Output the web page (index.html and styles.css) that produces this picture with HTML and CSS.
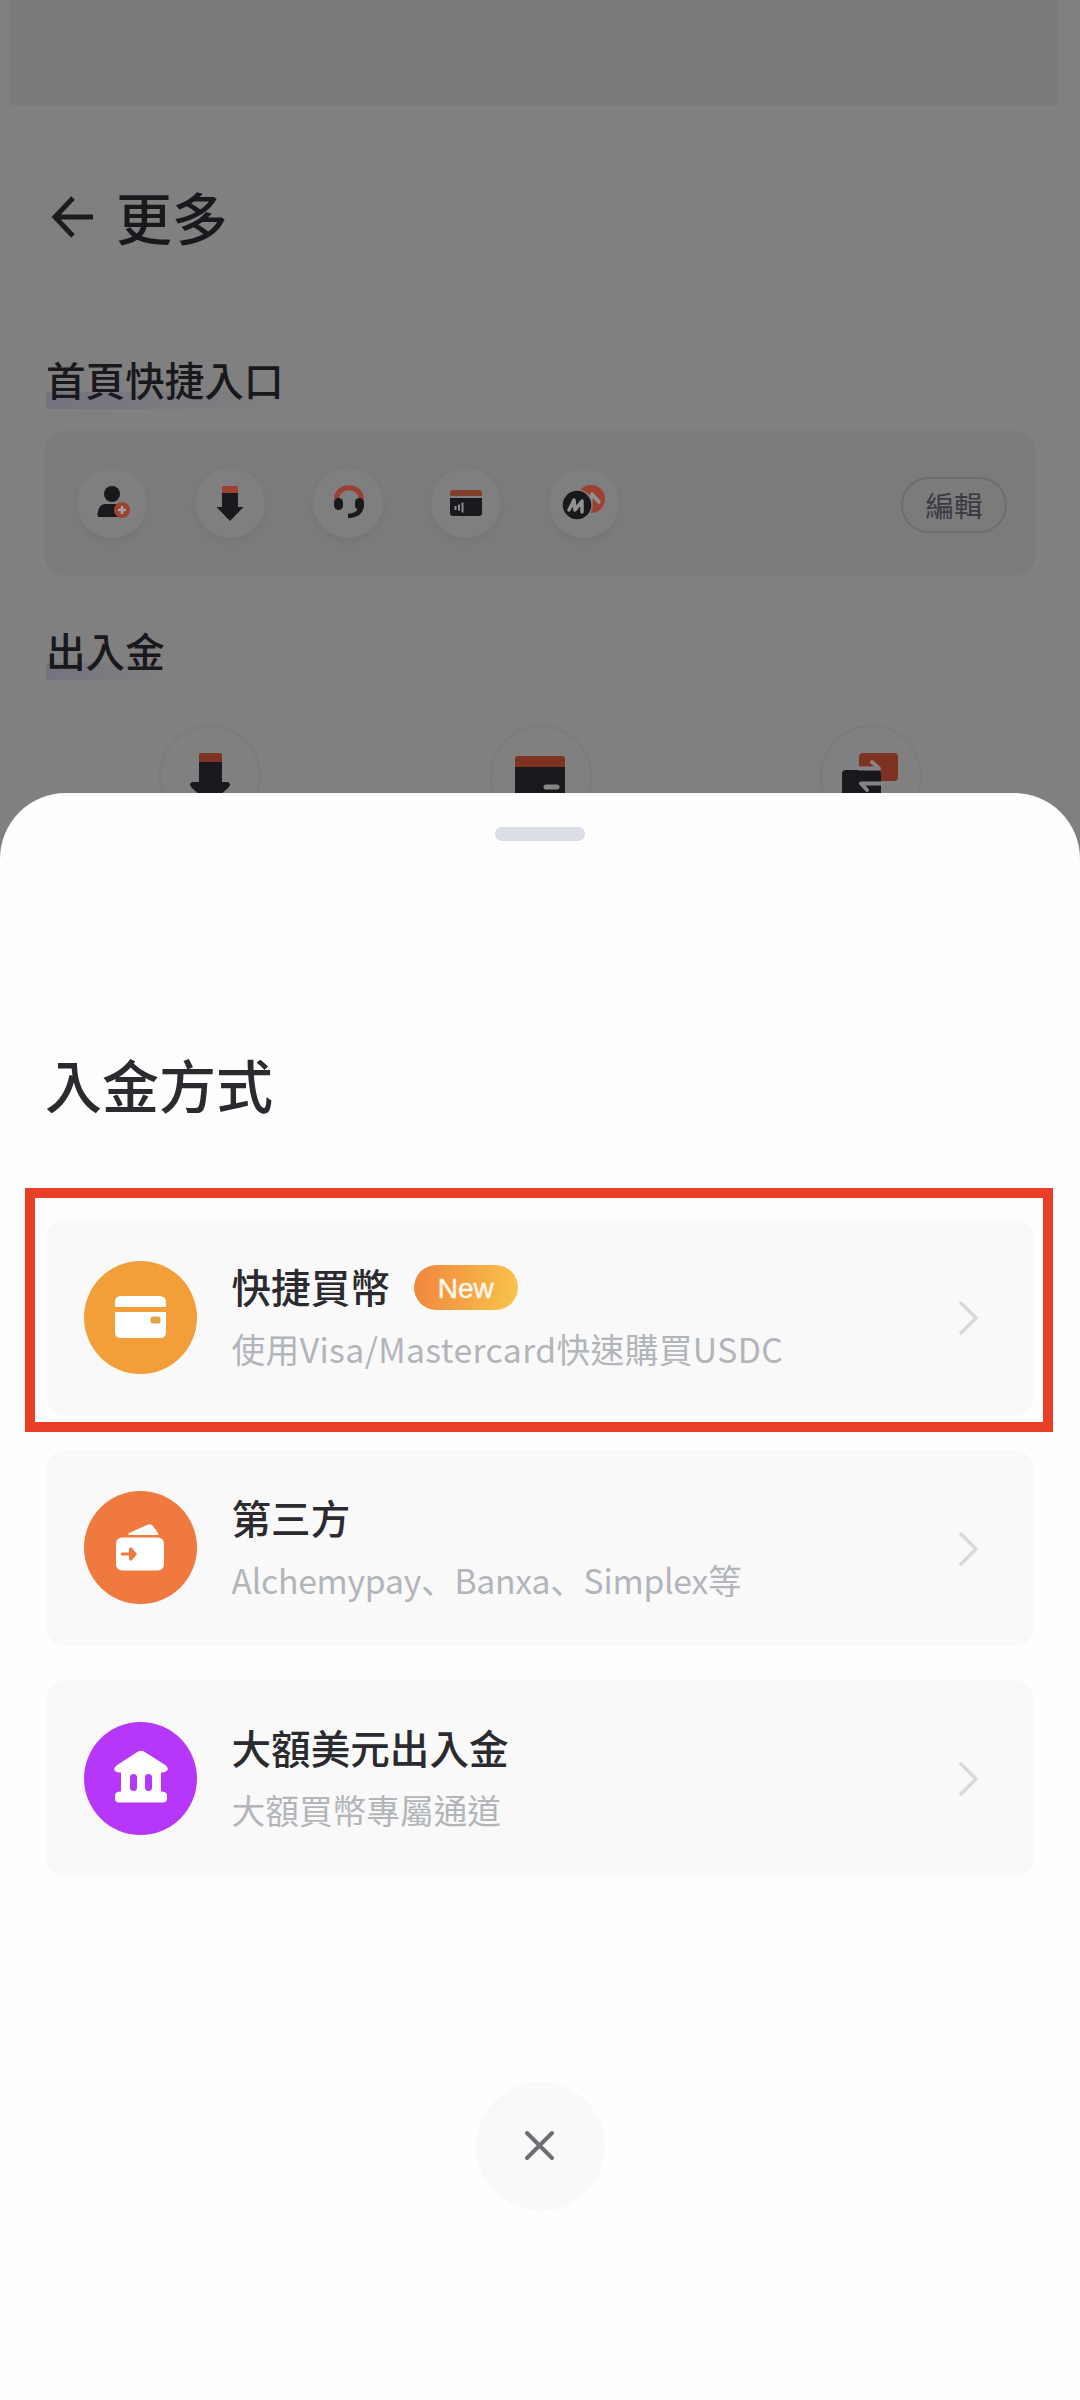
FILE: index.html
```html
<!DOCTYPE html>
<html lang="zh-Hant">
<head>
<meta charset="utf-8">
<title>更多</title>
<link rel="stylesheet" href="styles.css">
</head>
<body>
<div class="screen">
  <main class="page">
    <div class="status"></div>
    <header class="header">
      <svg class="back" width="44" height="44" viewBox="0 0 44 44"><path d="M42 22H5M22 3L4 22l18 19"/></svg>
      <h1>更多</h1>
    </header>
    <h2 class="section"><span>首頁快捷入口</span></h2>
    <section class="shortcuts">
      <div class="bubble"><svg width="36" height="36" viewBox="0 0 36 36"><circle class="ink" cx="18" cy="9" r="8"/><path class="ink" d="M11 19h17v13H6q-3 0-2.500-3.500Q5 19 11 19z"/><circle class="red" cx="28" cy="25" r="8"/><path class="plus" d="M28 21v8M24 25h8"/></svg></div>
      <div class="bubble"><svg width="36" height="36" viewBox="0 0 36 36"><path class="ink" d="M10 7h16v15h5.500L18 36 4.500 22H10z"/><path class="red" d="M10 2q0-1 1-1h14q1 0 1 1v6H10z"/></svg></div>
      <div class="bubble"><svg width="36" height="36" viewBox="0 0 36 36"><path class="band" d="M6.500 14C7 -1 31 -1 31.500 14"/><path class="mic" d="M31.500 19Q32 30 18 31"/><rect class="ink" x="4" y="13" width="9" height="12" rx="4.500"/><rect class="ink" x="25" y="13" width="9" height="12" rx="4.500"/></svg></div>
      <div class="bubble"><svg width="36" height="36" viewBox="0 0 36 36"><path class="rust" d="M2 11V8q0-3 3-3h26q3 0 3 3v3z"/><path class="ink" d="M2 13h32v15q0 3-3 3H5q-3 0-3-3z"/><path class="wave" d="M7.500 21v4M11 19.500v6M14.500 17.500v10"/></svg></div>
      <div class="bubble"><svg width="44" height="36" viewBox="0 0 44 36"><circle class="red" cx="29" cy="14" r="14"/><path class="letter" d="M28 19l2-10 7 8"/><circle class="coin" cx="15" cy="20" r="15"/><path class="letter" d="M7 25l5-10 1 10 7-9v11"/></svg></div>
      <button class="edit">編輯</button>
    </section>
    <h2 class="section funds"><span>出入金</span></h2>
    <section class="funds-row">
      <div class="ring"><svg width="56" height="56" viewBox="0 0 56 56"><path class="ink" d="M17 12h23v20h6q4 2 0 6L28 54 10 38q-4-4 0-6h7z"/><path class="brick" d="M17 12V5q0-2 2-2h19q2 0 2 2v7z"/></svg></div>
      <div class="ring"><svg width="56" height="56" viewBox="0 0 56 56"><path class="brick" d="M2 17V9q0-3 3-3h44q3 0 3 3v8z"/><path class="ink" d="M2 17h50v32H2z"/><path class="dash" d="M33 37h11"/></svg></div>
      <div class="ring"><svg width="60" height="56" viewBox="0 0 60 56"><rect class="brick" x="18" y="3" width="39" height="28" rx="4"/><path class="ink" d="M1 24q0-4 4-4h31q4 0 4 4v28H1z"/><path class="swap" d="M18 18.500h20L31 12"/><path class="swap" d="M41 33.500H20L26 40"/></svg></div>
    </section>
  </main>

  <aside class="sheet">
    <div class="handle"></div>
    <h2 class="sheet-title">入金方式</h2>
    <div class="methods">
      <div class="method picked">
        <div class="disc amber"><svg width="56" height="46" viewBox="0 0 56 46"><path d="M2 13V8q0-6 6-6h38q7 0 7 6v5zM2 18h51v20q0 6-6 6H8q-6 0-6-6z"/><rect class="cut-amber" x="37.500" y="22.500" width="10" height="7" rx="2.500"/></svg></div>
        <div class="label"><h3>快捷買幣 <em class="badge">New</em></h3><p class="cards">使用Visa/Mastercard快速購買USDC</p></div>
        <svg class="chevron" width="20" height="34" viewBox="0 0 20 34"><path d="M2 2l15 15L2 32"/></svg>
      </div>
      <div class="method">
        <div class="disc orange"><svg width="52" height="52" viewBox="0 0 52 52"><path d="M15 13L33 5q4-2 6 1l5 7q1 2-1 2H16q-3 0-1-2z"/><rect x="2" y="17.500" width="48" height="33" rx="6"/><path class="cut-orange" d="M8 32.500h7V29q1-3 3-1l5 6-5 6q-2 2-3-1v-3.500H8q-3-1.500 0-3z"/></svg></div>
        <div class="label"><h3>第三方</h3><p class="vendors">Alchemypay、Banxa、Simplex等</p></div>
        <svg class="chevron" width="20" height="34" viewBox="0 0 20 34"><path d="M2 2l15 15L2 32"/></svg>
      </div>
      <div class="method">
        <div class="disc violet"><svg width="56" height="54" viewBox="0 0 56 54"><path d="M25 2.500q3-1.500 6 0l22 14q3 3 1 5-1.500 2-5 2H48v19q6 0 6 4v3q0 4-4 4H6q-4 0-4-4v-3q0-4 6-4v-19H6q-3 0-4.500-2-1-3 2-5z"/><rect class="cut-violet" x="17" y="25" width="7" height="17" rx="3.500"/><rect class="cut-violet" x="32" y="25" width="7" height="17" rx="3.500"/></svg></div>
        <div class="label"><h3>大額美元出入金</h3><p>大額買幣專屬通道</p></div>
        <svg class="chevron" width="20" height="34" viewBox="0 0 20 34"><path d="M2 2l15 15L2 32"/></svg>
      </div>
    </div>
    <button class="close" aria-label="關閉"><svg width="32" height="32" viewBox="0 0 32 32"><path d="M3 3l25 25M28 3L3 28"/></svg></button>
  </aside>
</div>
</body>
</html>
```
FILE: styles.css
```css
* { box-sizing: border-box; margin: 0; padding: 0; }
body { background: #808080; font-family: "Noto Sans CJK TC", "Noto Sans", sans-serif; }
button { font: inherit; border: 0; }
svg { display: block; flex: none; }
.screen { position: relative; width: 1080px; height: 2400px; overflow: hidden; }
.page { height: 860px; background: #808080; color: #19181c; overflow: hidden; }
.status { height: 105px; margin: 0 22px 0 9px; background: #7a7a7a; }
.header { display: flex; align-items: center; height: 80px; margin: 72px 0 0 51px; gap: 21px; }
.header h1 { padding-bottom: 3px; font-size: 56px; font-weight: 500; line-height: 77px; }
.back { fill: none; stroke: #1c1c1c; stroke-width: 5; }
.section { height: 60px; margin: 92px 0 0 46px; font-size: 39.600px; font-weight: 500; line-height: 60px; }
.section span { display: inline-block; height: 60px; padding-right: 2px; background: linear-gradient(90deg, #747380, #808080 95%) 0 43px / 100% 17px no-repeat; }
.shortcuts { display: flex; align-items: center; gap: 48px; width: 992px; height: 145px; margin: 22px 0 0 44px; padding: 0 29px 0 33px; border-radius: 22px; background: #7b7b7b; }
.bubble { display: flex; align-items: center; justify-content: center; width: 70px; height: 70px; margin-bottom: 2px; border-radius: 50%; background: #7f7f7f; box-shadow: 0 4px 8px rgba(0,0,0,.05); }
.edit { width: 106px; height: 56px; margin: 2px 0 0 auto; border: 2px solid #6d6d71; border-radius: 28px; background: transparent; color: #3a3a42; font-size: 28.500px; line-height: 50px; }
.ink { fill: #19181c; }
.red { fill: #9c4130; }
.rust { fill: #804029; }
.brick { fill: #7d3222; }
.plus { fill: none; stroke: #aaa09e; stroke-width: 2.500; }
.band { fill: none; stroke: #9a4030; stroke-width: 5; }
.mic { fill: none; stroke: #19181c; stroke-width: 4.500; }
.wave { fill: none; stroke: #8d8d8f; stroke-width: 2; }
.letter { fill: none; stroke: #929292; stroke-width: 3.500; stroke-linejoin: round; stroke-linecap: round; }
.coin { fill: #19181c; stroke: #808080; stroke-width: 1.500; }
.dash { stroke: #868686; stroke-width: 5; stroke-linecap: round; }
.swap { fill: none; stroke: #858585; stroke-width: 4; stroke-linecap: round; stroke-linejoin: round; }
.section.funds { margin-top: 44px; }
.funds-row { display: flex; justify-content: space-between; margin: 45px 158px 0 159px; }
.ring { display: flex; align-items: center; justify-content: center; width: 102px; height: 102px; padding-top: 3px; border: 2px solid #7b7b7b; border-radius: 50%; }
.sheet { position: absolute; left: 0; top: 793px; width: 1080px; height: 1607px; border-radius: 66px 66px 0 0; background: #fefefe; color: #2b2a2f; display: flex; flex-direction: column; }
.handle { flex: none; align-self: center; width: 90px; height: 14px; margin-top: 34px; border-radius: 7px; background: #dbdde7; }
.sheet-title { margin: 202px 0 0 45px; font-size: 57px; line-height: 80px; font-weight: 500; }
.methods { display: flex; flex-direction: column; gap: 34px; margin: 96px 46px 0; }
.method { display: flex; align-items: center; height: 196.500px; padding: 0 55px 0 38px; border-radius: 20px; background: #f9f9fa; }
.picked { position: relative; }
.picked::after { content: ""; position: absolute; inset: -31px -19px -16px -21px; border: 10px solid #e93f26; }
.disc { display: flex; align-items: center; justify-content: center; flex: none; width: 113px; height: 113px; border-radius: 50%; fill: #fff; }
.amber { background: #f29f3a; }
.orange { background: #ef793f; }
.orange svg { margin-right: 2px; margin-bottom: 4px; }
.violet { background: #b636fa; }
.violet svg { margin-bottom: 5px; }
.cut-amber { fill: #e3a14b; }
.cut-orange { fill: #ef793f; }
.cut-violet { fill: #b636fa; }
.label { flex: 1; margin-left: 34.500px; padding-bottom: 2px; }
.label h3 { display: flex; align-items: center; gap: 24px; height: 56px; font-size: 39.600px; font-weight: 500; line-height: 56px; white-space: nowrap; }
.label p { height: 50px; margin-top: 10px; color: #b2b5b9; font-size: 33.700px; line-height: 50px; white-space: nowrap; }
.label .cards { letter-spacing: .4px; }
.label .vendors { font-family: "Noto Sans CJK SC", "Noto Sans", sans-serif; letter-spacing: -.25px; }
.badge { width: 104px; height: 45px; margin-top: 2px; border-radius: 23px; background: linear-gradient(100deg, #f1843e, #f8c54c); color: #fff8e8; font: 400 28px/47px "Liberation Sans", sans-serif; -webkit-text-stroke: .5px #fff8e8; text-align: center; }
.chevron { margin-top: 2px; fill: none; stroke: #d5dadf; stroke-width: 3.500; stroke-linecap: round; stroke-linejoin: round; }
.close { display: flex; align-items: center; justify-content: center; align-self: center; flex: none; width: 129px; height: 129px; margin-top: 205px; border-radius: 50%; background: #f9f9fa; }
.close path { stroke: #6b6f72; stroke-width: 4; stroke-linecap: round; }
```
